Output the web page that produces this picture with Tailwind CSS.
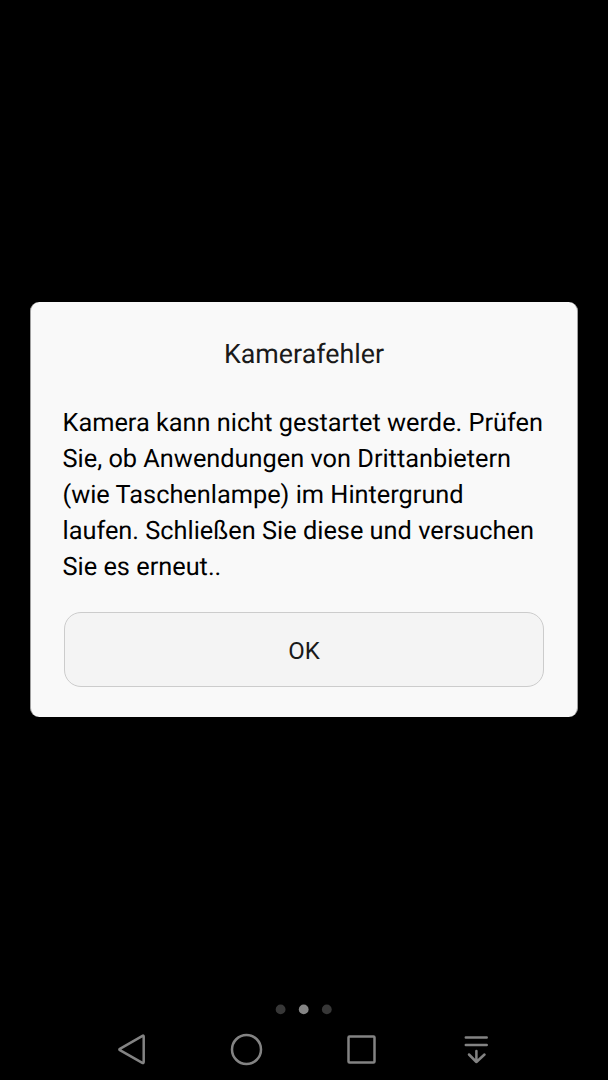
<!DOCTYPE html>
<html lang="de"><head><meta charset="utf-8"><title>Kamerafehler</title><script src="https://cdn.jsdelivr.net/npm/@tailwindcss/browser@4"></script></head>
<body class="bg-black">
<div class="flex h-[1080px] w-[608px] flex-col overflow-hidden bg-black px-[30px] pt-[302px] font-['Roboto',sans-serif] [text-rendering:geometricPrecision]">
<main class="flex h-[415px] w-[548px] shrink-0 flex-col rounded-[9px] border-x border-[#a0a0a0] bg-[#f9f9f9] px-[32px]">
<h1 class="mt-[34px] text-center text-[26.8px] leading-[36px] text-[#1a1a1a]">Kamerafehler</h1>
<p class="mt-[33.5px] -ml-[0.5px] h-[181px] whitespace-nowrap text-[25.33px] leading-[36.1px] text-black">Kamera kann nicht gestartet werde. Prüfen<br>Sie, ob Anwendungen von Drittanbietern<br>(wie Taschenlampe) im Hintergrund<br>laufen. Schließen Sie diese und versuchen<br>Sie es erneut..</p>
<button class="mx-px mt-[25.5px] h-[75px] shrink-0 rounded-[17px] border border-[#cccccc] bg-[#f4f4f4] pt-[2px] text-[24px] text-[#1a1a1a]">OK</button>
</main>
<div class="-mx-[30px] mt-[283px] h-[20px] shrink-0"><svg width="608" height="20"><circle cx="280.600" cy="9.400" r="4.900" fill="#373737"/><circle cx="303.700" cy="9.400" r="4.900" fill="#858585"/><circle cx="326.800" cy="9.400" r="4.900" fill="#373737"/></svg></div>
<nav class="-mx-[30px] h-[60px] shrink-0"><svg width="608" height="60" fill="none" stroke="#838383" stroke-width="2.5" stroke-linecap="round" stroke-linejoin="round"><path d="M142.500 15.800Q143.700 15.200 143.700 16.700V41.800Q143.700 43.600 142.300 42.800L119.900 30.200Q118.800 29.500 119.900 28.800Z"/><circle cx="246.500" cy="29.500" r="14.500"/><rect x="348.500" y="16.500" width="26" height="26" rx="1"/><path d="M465.800 17.500H486.700M465.800 24.900H486.700M476.400 31V42M469 34.500L476.400 42L484.500 34.500"/></svg></nav>
</div></body></html>
